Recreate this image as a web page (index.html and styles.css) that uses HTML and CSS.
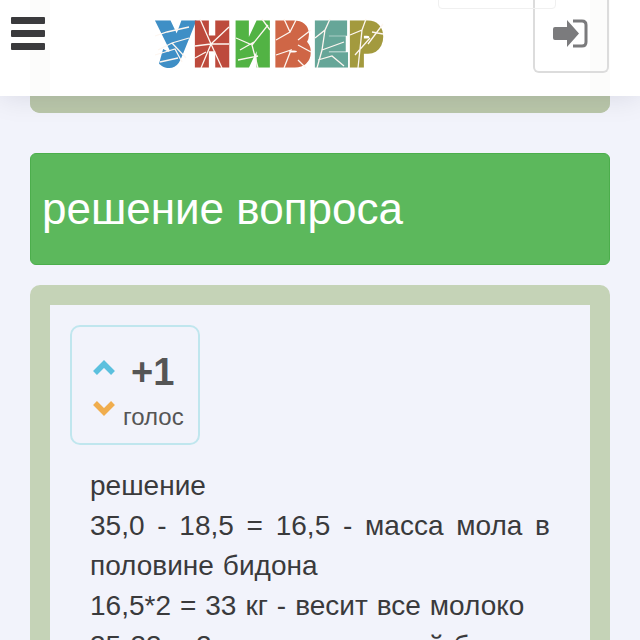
FILE: index.html
```html
<!DOCTYPE html>
<html lang="ru">
<head>
    <link rel="stylesheet" href="styles.css">
    <meta charset="UTF-8">
    <meta name="viewport" content="width=device-width, initial-scale=1.0">
    <title>решение вопроса</title>
</head>
<body>

    <!-- Top bar -->
    <header class="top-bar">
        <div class="menu-button">
            <span></span>
            <span></span>
            <span></span>
        </div>

        <svg class="logo" width="240" height="96" viewBox="150 0 240 96">
            <g transform="scale(0.82 1)">
                <text class="logo-word" y="63.5"><tspan class="letter-blue" x="197">У</tspan><tspan class="letter-red" x="238.4">Н</tspan><tspan class="letter-green" x="288">И</tspan><tspan class="letter-orange" x="336.6">В</tspan><tspan class="letter-teal" x="384.7">Е</tspan><tspan class="letter-olive" x="427.4">Р</tspan></text>
            </g>

            <!-- cracks over the letters -->
            <path class="crack" d="M155 36 167 32 189 27M158 50 172 43 189 38M172 43 186 58M155 55 175 49 182 62M160 62 178 58"/>
            <path class="crack" d="M211 44 200 19M211 44 229 27M211 44 229 44M211 44 195 46M211 44 201 68M211 44 222 68M195 58 206 52"/>
            <path class="crack" d="M236 38 252 45 258 68M252 45 268 25M262 19 270 30M240 50 254 42M238 60 258 56"/>
            <path class="crack" d="M276 40 290 32 284 19M290 32 296 20M276 55 291 50 284 68M298 40 311 30M298 45 311 52M298 60 306 68"/>
            <path class="crack" d="M315 38 325 30 330 19M325 30 322 50 317 68M322 50 344 42M318 60 332 56 344 66"/>
            <path class="crack" d="M350 35 362 30 366 19M362 30 358 68M355 55 370 38M372 32 383 34M368 44 383 24"/>
        </svg>

        <div class="search-box"></div>

        <a href="#" class="login-button">
            <svg width="36" height="30" viewBox="1 0 36 30">
                <path class="login-arrow" d="M15 1 27 14.5 15 28V21H3Q1 21 1 19V10Q1 8 3 8H15Z"/>
                <path class="login-door" d="M21 2H30Q34 2 34 6V23Q34 27 30 27H21"/>
            </svg>
        </a>
    </header>

    <main class="page">
        <div class="panel-top"></div>

        <div class="title-bar">решение вопроса</div>

        <section class="panel-answer">
            <div class="vote-box">
                <div class="vote-arrows">
                    <svg width="24" height="16" viewBox="0 0 24 16"><path class="arrow-up" d="M3 13 12 4 21 13"/></svg>
                    <svg width="24" height="16" viewBox="0 0 24 16"><path class="arrow-down" d="M3 3 12 12 21 3"/></svg>
                </div>
                <div class="vote-count">
                    <div class="vote-number">+1</div>
                    <div class="vote-label">голос</div>
                </div>
            </div>

            <p class="answer-text">
                решение<br>
                35,0 - 18,5 = 16,5 - масса мола в половине бидона<br>
                16,5*2 = 33 кг - весит все молоко<br>
                35-33 = 2 кг - масса пустой бидон
            </p>
        </section>
    </main>

</body>
</html>
```

FILE: styles.css
```css
html, body {
    height: 640px;
    overflow: hidden;
}
body {
    margin: 0;
    padding: 0;
    background-color: #f2f3fb;
    font-family: 'Liberation Sans', Arial, sans-serif;
    color: #3a3a3c;
}

/* Top bar */
.top-bar {
    position: absolute;
    left: 0;
    top: 0;
    z-index: 10;
    display: flex;
    align-items: flex-start;
    width: 640px;
    height: 96px;
    background-color: rgba(255, 255, 255, 0.95);
    box-shadow: 0 2px 26px rgba(0, 0, 40, 0.1);
}
.menu-button {
    display: flex;
    flex-direction: column;
    gap: 6px;
    width: 34px;
    margin: 17px 0 0 11px;
}
.menu-button span {
    height: 7px;
    border-radius: 1px;
    background-color: #3a3a3c;
}
.logo {
    display: block;
    margin-left: 105px;
}
.logo-word {
    font-family: 'Liberation Sans', Arial, sans-serif;
    font-weight: bold;
    font-size: 56px;
    stroke-width: 9px;
    stroke-linejoin: miter;
}
.letter-blue { fill: #3f8fc6; stroke: #3f8fc6; }
.letter-red { fill: #bd4a3c; stroke: #bd4a3c; }
.letter-green { fill: #52b344; stroke: #52b344; }
.letter-orange { fill: #cf6646; stroke: #cf6646; }
.letter-teal { fill: #66a698; stroke: #66a698; }
.letter-olive { fill: #a39a3e; stroke: #a39a3e; }
.crack {
    fill: none;
    stroke: #fdf6f0;
    stroke-width: 1.3;
}
.search-box {
    position: absolute;
    left: 438px;
    top: -10px;
    width: 116px;
    height: 17px;
    border: 1px solid #f0f0f0;
    border-radius: 4px;
}
.login-button {
    display: flex;
    justify-content: center;
    box-sizing: border-box;
    width: 76px;
    height: 73px;
    margin-left: auto;
    margin-right: 31px;
    padding-top: 19px;
    border: 2px solid #dcdcdc;
    border-top: none;
    border-radius: 0 0 6px 6px;
}
.login-button svg {
    display: block;
}
.login-arrow {
    fill: #7b7b7d;
}
.login-door {
    fill: none;
    stroke: #7b7b7d;
    stroke-width: 3;
}

/* Page content */
.page {
    padding: 0 30px;
}
.panel-top {
    box-sizing: border-box;
    height: 113px;
    border: 20px solid #bac7aa;
    border-top: none;
    border-bottom-width: 17px;
    border-radius: 0 0 10px 10px;
    background-color: #fff;
}
.title-bar {
    box-sizing: border-box;
    height: 112px;
    margin-top: 40px;
    padding: 0 11px;
    border: 1px solid #4cae4c;
    border-radius: 6px;
    background-color: #5cb85c;
    color: #fff;
    font-size: 44px;
    line-height: 110px;
}
.panel-answer {
    margin-top: 20px;
    padding: 20px;
    border: 20px solid #c5d3b7;
    border-radius: 10px;
}

/* Votes */
.vote-box {
    display: flex;
    box-sizing: border-box;
    width: 130px;
    height: 120px;
    padding: 33px 0 0 20px;
    border: 2px solid #c0e6ee;
    border-radius: 10px;
}
.vote-arrows {
    display: flex;
    flex-direction: column;
    gap: 24px;
    width: 30px;
}
.vote-arrows svg {
    display: block;
}
.arrow-up, .arrow-down {
    fill: none;
    stroke-width: 5.5;
}
.arrow-up {
    stroke: #5bc0de;
}
.arrow-down {
    stroke: #f0ad4e;
}
.vote-count {
    margin-top: -8px;
    color: #555;
}
.vote-number {
    padding-left: 9px;
    font-size: 38px;
    font-weight: bold;
    line-height: 40px;
}
.vote-label {
    margin-top: 12px;
    padding-left: 1px;
    font-size: 24px;
    line-height: 26px;
}
.answer-text {
    margin: 21px 0 0;
    padding: 0 20px;
    font-size: 28px;
    word-spacing: 1.2px;
    line-height: 40px;
    text-align: justify;
}
```
